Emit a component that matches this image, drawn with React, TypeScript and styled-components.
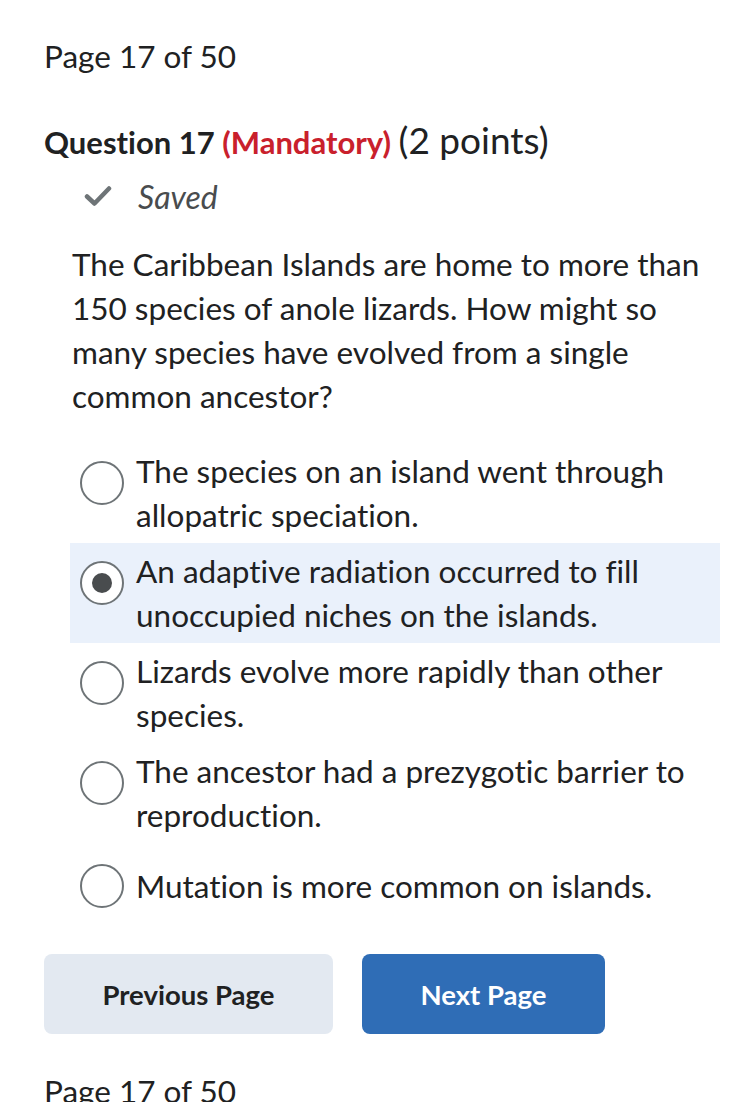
import React from "react";
import styled, { createGlobalStyle } from "styled-components";

const Global = createGlobalStyle`
  html, body { margin: 0; padding: 0; background: #ffffff; }
  body {
    font-family: Lato, "Open Sans", sans-serif;
    color: #202122;
    overflow: hidden;
    font-variant-ligatures: none;
    font-feature-settings: "liga" 0, "clig" 0;
  }
`;

const Page = styled.div`
  width: 744px;
  height: 1102px;
  overflow: hidden;
  padding: 34px 0 0 44px;
  box-sizing: border-box;
`;

const PageLabel = styled.div<{ $top?: number }>`
  font-size: 31.5px;
  line-height: 44px;
  margin-top: ${(p) => p.$top ?? 0}px;
  color: #202122;
`;

const Heading = styled.h2`
  margin: 40px 0 0 0;
  font-size: 31px;
  line-height: 44px;
  font-weight: 700;
  color: #202122;
`;

const Mandatory = styled.span`
  color: #c9202c;
`;

const Points = styled.span`
  font-weight: 400;
  font-size: 37px;
`;

const SavedRow = styled.div`
  display: flex;
  align-items: center;
  gap: 26px;
  margin: 10px 0 0 40px;
  height: 44px;
`;

const SavedText = styled.span`
  font-style: italic;
  font-size: 32px;
  color: #494c4e;
`;

const QuestionText = styled.p`
  margin: 24px 0 0 28px;
  width: 650px;
  font-size: 31.5px;
  line-height: 44px;
  color: #202122;
`;

const Options = styled.div`
  margin: 25px 0 0 26px;
  width: 650px;
  display: flex;
  flex-direction: column;
`;

const OptionRow = styled.label<{ $selected?: boolean; $single?: boolean }>`
  display: flex;
  align-items: ${(p) => (p.$single ? "center" : "flex-start")};
  gap: 12px;
  padding: ${(p) => (p.$single ? "21px 10px 21px 10px" : "6px 10px")};
  background: ${(p) => (p.$selected ? "#eaf1fb" : "transparent")};
  font-size: 31.5px;
  line-height: 44px;
  color: #202122;
`;

const Radio = styled.span<{ $single?: boolean }>`
  flex: 0 0 auto;
  width: 44px;
  height: 44px;
  box-sizing: border-box;
  border: 2px solid #6e7477;
  border-radius: 50%;
  background: #fff;
  margin-top: ${(p) => (p.$single ? 0 : 12)}px;
  display: flex;
  align-items: center;
  justify-content: center;
`;

const Dot = styled.span`
  width: 20px;
  height: 20px;
  border-radius: 50%;
  background: #494c4e;
`;

const Buttons = styled.div`
  display: flex;
  gap: 29px;
  margin-top: 25px;
`;

const Button = styled.button<{ $primary?: boolean }>`
  height: 80px;
  width: ${(p) => (p.$primary ? 243 : 289)}px;
  border: none;
  border-radius: 8px;
  font-family: Lato, "Open Sans", sans-serif;
  font-variant-ligatures: none;
  font-size: 27.5px;
  font-weight: 700;
  background: ${(p) => (p.$primary ? "#2f6db6" : "#e3e9f1")};
  color: ${(p) => (p.$primary ? "#ffffff" : "#202122")};
`;

const options = [
  "The species on an island went through allopatric speciation.",
  "An adaptive radiation occurred to fill unoccupied niches on the islands.",
  "Lizards evolve more rapidly than other species.",
  "The ancestor had a prezygotic barrier to reproduction.",
  "Mutation is more common on islands.",
];

export default function App() {
  return (
    <Page>
      <Global />
      <PageLabel>Page 17 of 50</PageLabel>
      <Heading>
        Question 17 <Mandatory>(Mandatory)</Mandatory> <Points>(2 points)</Points>
      </Heading>
      <SavedRow>
        <svg width="28" height="22" viewBox="0 0 28 22">
          <path d="M3 11.5 L10.5 18.5 L25 3.5" fill="none" stroke="#6e7477" strokeWidth="4.5" strokeLinecap="round" strokeLinejoin="round" />
        </svg>
        <SavedText>Saved</SavedText>
      </SavedRow>
      <QuestionText>
        The Caribbean Islands are home to more than 150 species of anole lizards. How might so many species have evolved from a single common ancestor?
      </QuestionText>
      <Options>
        {options.map((o, i) => {
          const single = i === 4;
          const selected = i === 1;
          return (
            <OptionRow key={i} $selected={selected} $single={single}>
              <Radio $single={single}>{selected && <Dot />}</Radio>
              <span>{o}</span>
            </OptionRow>
          );
        })}
      </Options>
      <Buttons>
        <Button>Previous Page</Button>
        <Button $primary>Next Page</Button>
      </Buttons>
      <PageLabel $top={35}>Page 17 of 50</PageLabel>
    </Page>
  );
}
